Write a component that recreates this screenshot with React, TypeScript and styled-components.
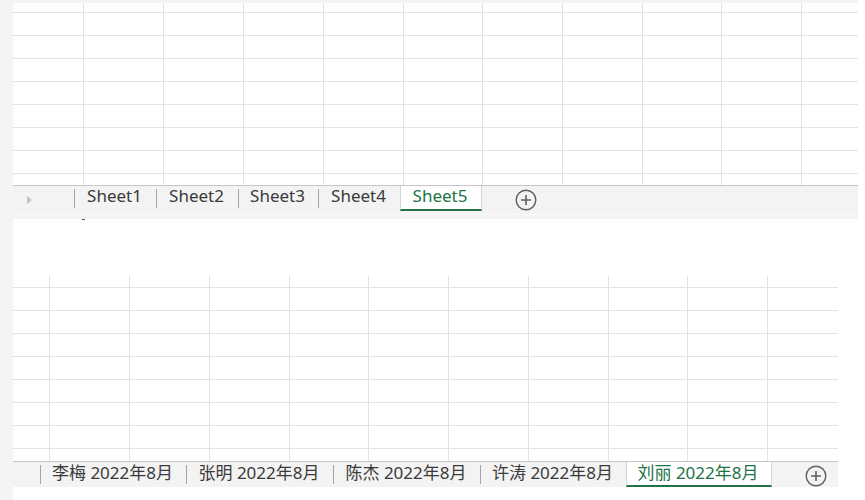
import * as React from 'react';
import styled, { createGlobalStyle } from 'styled-components';

const GlobalStyle = createGlobalStyle`
body {
margin: 0;
background: #ffffff;
font-family: "Noto Sans", "Noto Sans CJK SC", sans-serif;
}
`

interface TabInfo {
    label: string;
    width: number;
}

interface SheetProps {
    width: number;
    columns: number[];
    rows: number[];
    navWidth: number;
    showArrow?: boolean;
    tabs: TabInfo[];
    activeIndex: number;
}

function Grid({ columns, rows }: { columns: number[]; rows: number[] }) {
    const cells: React.ReactNode[] = [];
    rows.forEach((_, r) => {
        columns.forEach((_, c) => {
            cells.push(
                <Cell key={r + '-' + c} $right={c < columns.length - 1} $bottom={r < rows.length - 1} />
            );
        });
    });
    return <GridBox style={{
        gridTemplateColumns: columns.map(w => w + 'px').join(' '),
        gridTemplateRows: rows.map(h => h + 'px').join(' '),
    }}>{cells}</GridBox>
}

function PlusIcon() {
    return <svg width="22" height="22" viewBox="0 0 22 22">
        <circle cx="11" cy="11" r="9.8" fill="none" stroke="#5f5f5f" strokeWidth="1.4" />
        <path d="M11 6v10M6 11h10" stroke="#5f5f5f" strokeWidth="1.6" />
    </svg>
}

function Sheet(props: SheetProps) {
    const { tabs, activeIndex } = props;
    return <SheetBox $width={props.width}>
        <Grid columns={props.columns} rows={props.rows} />
        <TabBar>
            <Nav $width={props.navWidth}>{props.showArrow && <Arrow />}</Nav>
            {tabs.map((tab, i) => {
                const active = i === activeIndex;
                const sep = !active && i !== activeIndex + 1;
                return <React.Fragment key={tab.label}>
                    {sep && <Separator />}
                    <Tab $active={active} $width={tab.width}>{tab.label}</Tab>
                </React.Fragment>
            })}
            <AddButton><PlusIcon /></AddButton>
        </TabBar>
    </SheetBox>
}

export default function App() {
    return <>
        <GlobalStyle />
        <Page>
            <Gutter />
            <Main>
                <TopStrip />
                <Sheet
                    width={845}
                    columns={[71, 80, 80, 80, 80, 79, 80, 80, 79, 80, 56]}
                    rows={[10, 23, 23, 23, 23, 23, 23, 23, 11]}
                    navWidth={61}
                    showArrow
                    tabs={[
                        { label: 'Sheet1', width: 81 },
                        { label: 'Sheet2', width: 81 },
                        { label: 'Sheet3', width: 79 },
                        { label: 'Sheet4', width: 81 },
                        { label: 'Sheet5', width: 82 },
                    ]}
                    activeIndex={4}
                />
                <BarFooter />
                <Gap><Tick /></Gap>
                <Sheet
                    width={825}
                    columns={[37, 80, 80, 80, 79, 80, 80, 80, 79, 80, 70]}
                    rows={[12, 23, 23, 23, 23, 23, 23, 23, 12]}
                    navWidth={27}
                    tabs={[
                        { label: '李梅 2022年8月', width: 145 },
                        { label: '张明 2022年8月', width: 146 },
                        { label: '陈杰 2022年8月', width: 146 },
                        { label: '许涛 2022年8月', width: 145 },
                        { label: '刘丽 2022年8月', width: 146 },
                    ]}
                    activeIndex={4}
                />
            </Main>
        </Page>
    </>
}

const Page = styled.div`
display: flex;
height: 500px;
overflow: hidden;
`

const Gutter = styled.div`
width: 13px;
flex-shrink: 0;
background: #f4f4f4;
`

const Main = styled.div`
display: flex;
flex-direction: column;
`

const TopStrip = styled.div`
width: 845px;
height: 3px;
background: #f4f4f4;
`

const SheetBox = styled.div<{ $width: number }>`
width: ${p => p.$width}px;
display: flex;
flex-direction: column;
`

const GridBox = styled.div`
display: grid;
background: #ffffff;
`

const Cell = styled.div<{ $right: boolean; $bottom: boolean }>`
box-sizing: border-box;
border-right: ${p => p.$right ? '1px solid #e1e1e1' : 'none'};
border-bottom: ${p => p.$bottom ? '1px solid #e3e3e3' : 'none'};
`

const TabBar = styled.div`
box-sizing: border-box;
height: 26px;
display: flex;
align-items: stretch;
background: #f3f3f3;
border-top: 1px solid #c6c6c6;
`

const Nav = styled.div<{ $width: number }>`
width: ${p => p.$width}px;
flex-shrink: 0;
display: flex;
align-items: center;
padding-left: 14px;
box-sizing: border-box;
`

const Arrow = styled.div`
width: 0;
height: 0;
margin-top: 2px;
border-top: 4px solid transparent;
border-bottom: 4px solid transparent;
border-left: 5px solid #c4c4c4;
`

const Separator = styled.div`
width: 1px;
height: 19px;
align-self: center;
background: #a3a3a3;
flex-shrink: 0;
`

const Tab = styled.div<{ $active: boolean; $width: number }>`
box-sizing: border-box;
width: ${p => p.$width}px;
flex-shrink: 0;
display: flex;
align-items: center;
justify-content: center;
padding-bottom: 4px;
padding-right: 2px;
font-size: 17px;
white-space: nowrap;
color: ${p => p.$active ? '#217346' : '#3a3a3a'};
background: ${p => p.$active ? '#ffffff' : 'transparent'};
border-left: ${p => p.$active ? '1px solid #d4d4d4' : 'none'};
border-right: ${p => p.$active ? '1px solid #d4d4d4' : 'none'};
border-bottom: ${p => p.$active ? '2px solid #217346' : 'none'};
margin-bottom: ${p => p.$active ? '0' : '2px'};
`

const AddButton = styled.div`
display: flex;
align-items: center;
margin-left: 33px;
padding-top: 2px;
`

const BarFooter = styled.div`
width: 845px;
height: 8px;
background: linear-gradient(#f3f3f3 0 3px, #fbfbfb 3px 4px, #f3f3f3 4px);
`

const Gap = styled.div`
height: 57px;
`

const Tick = styled.div`
width: 3px;
height: 1px;
margin-left: 69px;
background: #555555;
`
